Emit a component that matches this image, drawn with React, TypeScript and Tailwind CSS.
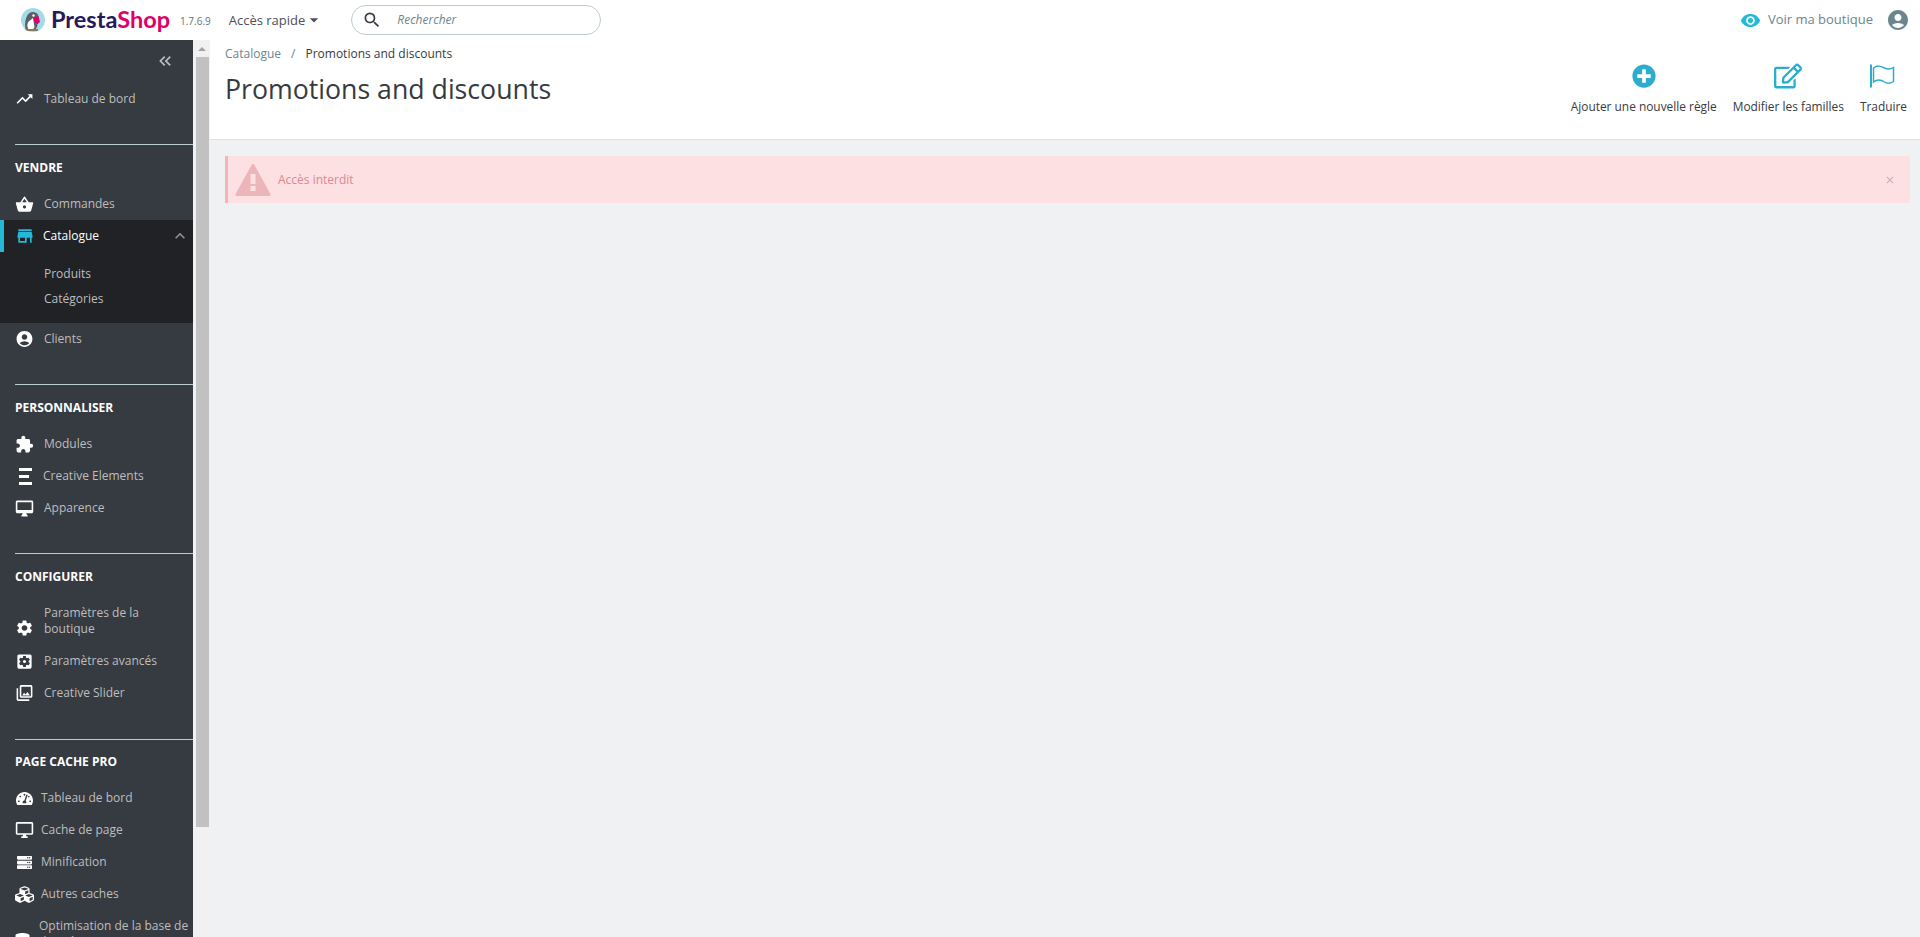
import type { ReactNode } from 'react'
import {
  MdTrendingUp,
  MdShoppingBasket,
  MdStore,
  MdAccountCircle,
  MdExtension,
  MdOutlineDesktopMac,
  MdSettings,
  MdSettingsApplications,
  MdOutlinePhotoLibrary,
  MdVisibility,
  MdSearch,
  MdKeyboardArrowUp,
  MdKeyboardDoubleArrowLeft,
  MdArrowDropDown,
  MdOutlineDesktopWindows,
  MdClose,
} from 'react-icons/md'
import { FaPlusCircle, FaRegEdit, FaTachometerAlt, FaServer, FaCubes, FaDatabase } from 'react-icons/fa'

function Logo() {
  return (
    <svg width="24" height="24" viewBox="0 0 24 24" className="shrink-0">
      <circle cx="12" cy="12" r="12" fill="#a4dbe8" />
      <path d="M4.500 21c-1-6 0-13 4-16 3-2 8-1 9 3l-2 4 1 6-3 5H8z" fill="#5b6066" />
      <path d="M7 20.500c-1.500-4 0-7 2-8l3-2.500 1.500 9-2 3H9z" fill="#ffffff" />
      <path d="M12.500 9.500l5-1.500 1.500 6-3 2.500-3-3.500z" fill="#df0067" />
      <circle cx="12.500" cy="7.500" r="1.200" fill="#ffffff" />
      <path d="M4 21h13v2H6z" fill="#8a7a5c" />
    </svg>
  )
}

function CreativeElementsIcon() {
  return (
    <svg width="14" height="17" viewBox="0 0 14 17" fill="#ffffff">
      <rect x="1" y="0" width="13" height="3" />
      <rect x="1" y="7" width="10" height="3" />
      <rect x="1" y="14" width="13" height="3" />
    </svg>
  )
}

function FlagIcon() {
  return (
    <svg width="28" height="24" viewBox="0 0 28 24" fill="none" stroke="#2eacce" strokeWidth="1.5">
      <path d="M2 0.500v23" strokeWidth="2" />
      <path d="M4.500 4c4-3 7-2 11 0s6 1.500 9-0.500v14c-3 2-6 2.500-9 0.500s-7-3-11 0z" />
    </svg>
  )
}

function AlertIcon() {
  return (
    <svg width="36" height="34" viewBox="0 0 36 34" className="shrink-0">
      <path d="M18 2.500L34 31.500H2z" fill="#ecb5ba" stroke="#ecb5ba" strokeWidth="3" strokeLinejoin="round" />
      <rect x="15.500" y="11" width="5" height="10" fill="#fde0e2" />
      <rect x="15.500" y="23" width="5" height="5" fill="#fde0e2" />
    </svg>
  )
}

function NavRow({ icon, label, gap = 'gap-[10px]' }: { icon: ReactNode; label: ReactNode; gap?: string }) {
  return (
    <div className={`flex h-8 items-center pl-[15px] ${gap} text-[12px] text-[#bebebe]`}>
      <span className="flex w-[19px] shrink-0 items-center justify-center text-white">{icon}</span>
      <span className="leading-4">{label}</span>
    </div>
  )
}

function SectionTitle({ children, height = 'h-[43px]' }: { children: ReactNode; height?: string }) {
  return (
    <>
      <div className="ml-[15px] h-px bg-[#bbcdd2]" />
      <div className={`flex ${height} items-center pl-[15px] pt-[2px] text-[12px] font-bold text-white`}>{children}</div>
    </>
  )
}

function Sidebar() {
  return (
    <nav className="h-full w-[193px] shrink-0 overflow-hidden bg-[#363a41]">
      <div className="flex h-[43px] items-center justify-end pb-[2px] pr-[18px] text-[#bebebe]">
        <MdKeyboardDoubleArrowLeft size={20} />
      </div>
      <NavRow icon={<MdTrendingUp size={22} />} label="Tableau de bord" />

      <div className="mt-[29px]">
        <SectionTitle height="h-[43px]">VENDRE</SectionTitle>
        <NavRow icon={<MdShoppingBasket size={21} />} label="Commandes" />
        <div className="bg-[#202226]">
          <div className="flex h-8 items-center border-l-[4px] border-[#25b9d7] pl-[11px] pr-[3px] text-[12px] text-white">
            <MdStore size={20} className="mr-[8px] text-[#25b9d7]" />
            <span>Catalogue</span>
            <MdKeyboardArrowUp size={20} className="ml-auto text-[#8e9094]" />
          </div>
          <div className="pb-[11px] pl-[44px] pt-[9px] text-[12px] text-[#bebebe]">
            <div className="flex h-[25px] items-center">Produits</div>
            <div className="flex h-[26px] items-center">Catégories</div>
          </div>
        </div>
        <NavRow icon={<MdAccountCircle size={20} />} label="Clients" />
      </div>

      <div className="mt-[29px]">
        <SectionTitle>PERSONNALISER</SectionTitle>
        <NavRow icon={<MdExtension size={21} />} label="Modules" />
        <NavRow icon={<CreativeElementsIcon />} label="Creative Elements" gap="gap-[9px]" />
        <NavRow icon={<MdOutlineDesktopMac size={21} />} label="Apparence" />
      </div>

      <div className="mt-[29px]">
        <SectionTitle>CONFIGURER</SectionTitle>
        <div className="flex h-12 items-center gap-[10px] pl-[15px] pr-[20px] text-[12px] text-[#bebebe]">
          <MdSettings size={20} className="mt-[14px] w-[19px] shrink-0 text-white" />
          <span className="leading-4">Paramètres de la boutique</span>
        </div>
        <NavRow icon={<MdSettingsApplications size={21} />} label="Paramètres avancés" />
        <NavRow icon={<MdOutlinePhotoLibrary size={20} />} label="Creative Slider" />
      </div>

      <div className="mt-[30px]">
        <SectionTitle height="h-[42px]">PAGE CACHE PRO</SectionTitle>
        <NavRow icon={<FaTachometerAlt size={17} />} label="Tableau de bord" gap="gap-[7px]" />
        <NavRow icon={<MdOutlineDesktopWindows size={20} />} label="Cache de page" gap="gap-[7px]" />
        <NavRow icon={<FaServer size={15} />} label="Minification" gap="gap-[7px]" />
        <NavRow icon={<FaCubes size={19} />} label="Autres caches" gap="gap-[7px]" />
        <div className="flex h-12 items-center gap-[9px] pl-[15px] text-[12px] text-[#bebebe]">
          <FaDatabase size={16} className="mt-[14px] w-[15px] shrink-0 text-white" />
          <span className="leading-4">Optimisation de la base de données</span>
        </div>
      </div>
    </nav>
  )
}

function Scrollbar() {
  return (
    <div className="flex h-full w-[17px] shrink-0 flex-col items-center bg-[#f1f1f1]">
      <div className="flex h-[17px] items-center justify-center">
        <div className="h-0 w-0 border-x-[4px] border-b-[4px] border-x-transparent border-b-[#a3a3a3]" />
      </div>
      <div className="ml-[1px] h-[770px] w-[13px] bg-[#c1c1c1]" />
    </div>
  )
}

function ToolbarAction({ icon, label }: { icon: ReactNode; label: string }) {
  return (
    <div className="flex flex-col items-center text-[11.9px] text-[#363a41]">
      <div className="flex h-[28px] items-center justify-center text-[#2eacce]">{icon}</div>
      <div className="mt-[7px] leading-[18px]">{label}</div>
    </div>
  )
}

export default function App() {
  return (
    <div className="flex h-[937px] w-[1920px] flex-col overflow-hidden bg-[#eff1f2] font-['Open_Sans','Noto_Sans',sans-serif]">
      <header className="flex h-10 shrink-0 items-center bg-white pl-[21px] pr-[10px]">
        <Logo />
        <span className="ml-[6px] font-['Lato',sans-serif] text-[23.5px] font-bold leading-none text-[#251b5b]">
          Presta<span className="text-[#df0067]">Shop</span>
        </span>
        <span className="ml-[10px] mt-[3px] text-[10px] text-[#6a6f75]">1.7.6.9</span>
        <span className="ml-[18px] mt-px text-[13px] text-[#4b5056]">Accès rapide</span>
        <MdArrowDropDown size={20} className="ml-[-1px] text-[#4b5056]" />
        <div className="ml-[27px] flex h-[30px] w-[250px] items-center rounded-full border border-[#bbcdd2] bg-white pl-[10px]">
          <MdSearch size={20} className="text-[#363a41]" />
          <span className="ml-[15px] text-[12px] italic text-[#6c868e]">Rechercher</span>
        </div>
        <div className="ml-auto flex items-center">
          <MdVisibility size={21} className="text-[#25b9d7]" />
          <span className="ml-[7px] mb-px text-[13px] text-[#6c868e]">Voir ma boutique</span>
          <MdAccountCircle size={24} className="ml-[13px] text-[#6c868e]" />
        </div>
      </header>

      <div className="flex min-h-0 flex-1">
        <Sidebar />
        <Scrollbar />
        <main className="min-w-0 flex-1">
          <div className="flex h-[100px] justify-between border-b border-[#dfdfdf] bg-white pl-[15px] pr-[13px]">
            <div>
              <div className="mt-[5px] flex items-center text-[12px] leading-[18px]">
                <span className="text-[#6c868e]">Catalogue</span>
                <span className="mx-[10px] text-[#6c868e]">/</span>
                <span className="text-[#363a41]">Promotions and discounts</span>
              </div>
              <h1 className="mt-[4px] text-[26.7px] font-normal leading-[44px] text-[#363a41]">Promotions and discounts</h1>
            </div>
            <div className="mt-[22px] flex items-start gap-[16px]">
              <ToolbarAction icon={<FaPlusCircle size={24} />} label="Ajouter une nouvelle règle" />
              <ToolbarAction icon={<FaRegEdit size={28} />} label="Modifier les familles" />
              <ToolbarAction icon={<FlagIcon />} label="Traduire" />
            </div>
          </div>

          <div className="mx-[15px] mr-[10px] mt-[16px] flex h-[47px] items-center rounded-r-[2px] border-l-[3px] border-[#f2b6ba] bg-[#fde0e2] pl-[7px] pr-[14px]">
            <AlertIcon />
            <span className="ml-[7px] text-[12px] text-[#d78b92]">Accès interdit</span>
            <MdClose size={12} className="ml-auto text-[#c4b0b4]" />
          </div>
        </main>
      </div>
    </div>
  )
}
